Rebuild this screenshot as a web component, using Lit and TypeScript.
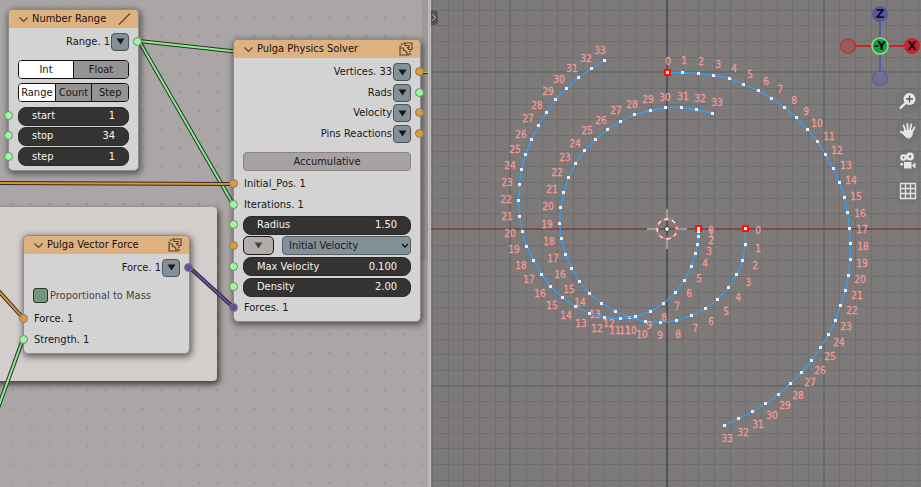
import { LitElement, html, svg, css, nothing } from "lit";
import { customElement, property } from "lit/decorators.js";

const FONT = css`"DejaVu Sans Condensed", "DejaVu Sans", sans-serif`;

type Kind = "green" | "orange" | "purple";
// Each entry: point x, point y, label x, label y
type Mark = [number, number, number, number];

const WIDE: Mark[] = [
  [667, 72, 668, 61], [682, 72, 684, 60], [698, 73, 701, 61], [713, 75, 718, 64], [729, 78, 734, 68],
  [743, 84, 750, 74], [758, 90, 766, 81], [771, 98, 780, 89], [784, 107, 794, 100], [796, 117, 806, 111],
  [807, 129, 817, 123], [817, 141, 829, 136], [825, 154, 837, 150], [833, 168, 846, 165], [839, 182, 851, 180],
  [844, 197, 856, 196], [847, 212, 860, 213], [849, 228, 862, 229], [850, 243, 863, 246], [850, 259, 862, 263],
  [848, 275, 860, 279], [845, 290, 857, 295], [840, 305, 852, 310], [835, 320, 846, 326], [828, 334, 839, 342],
  [820, 347, 830, 356], [811, 360, 820, 370], [801, 372, 810, 382], [790, 383, 798, 395], [778, 394, 785, 405],
  [765, 403, 772, 415], [752, 411, 758, 424], [738, 418, 743, 432], [724, 425, 727, 438],
];

const MIDDLE: Mark[] = [
  [745, 228, 758, 230], [745, 244, 758, 248], [742, 260, 755, 265], [736, 274, 748, 282], [728, 287, 738, 297],
  [717, 299, 726, 311], [705, 308, 711, 321], [691, 315, 695, 328], [676, 320, 678, 334], [660, 322, 660, 335],
  [645, 321, 642, 334], [629, 317, 625, 330], [615, 311, 609, 323], [601, 303, 595, 314], [589, 293, 580, 302],
  [579, 281, 569, 289], [571, 268, 560, 274], [565, 254, 553, 258], [561, 238, 549, 241], [559, 223, 547, 224],
  [560, 207, 548, 206], [563, 192, 552, 189], [568, 177, 557, 172], [575, 163, 565, 157], [584, 150, 575, 143],
  [595, 139, 587, 130], [607, 129, 601, 120], [620, 121, 616, 110], [634, 114, 632, 104], [650, 110, 648, 99],
  [665, 107, 665, 97], [681, 107, 683, 96], [696, 109, 700, 98], [712, 113, 717, 102],
];

const TIGHT: Mark[] = [
  [698, 228, 711, 230], [698, 231, 711, 233], [698, 236, 711, 240], [697, 244, 709, 251], [695, 253, 705, 263],
  [691, 266, 699, 278], [684, 280, 689, 293], [675, 292, 677, 306], [663, 303, 664, 317], [650, 311, 649, 325],
  [635, 316, 631, 330], [620, 318, 615, 330], [604, 317, 597, 328], [589, 313, 581, 323], [575, 306, 566, 315],
  [562, 297, 552, 305], [550, 286, 540, 293], [541, 274, 529, 279], [533, 260, 521, 265], [526, 246, 514, 249],
  [522, 231, 510, 233], [519, 216, 507, 216], [518, 200, 506, 199], [519, 184, 507, 182], [521, 169, 510, 165],
  [525, 154, 515, 149], [531, 139, 521, 134], [538, 125, 528, 118], [546, 112, 537, 105], [555, 99, 548, 91],
  [566, 88, 559, 79], [578, 77, 572, 68], [591, 68, 586, 58], [604, 60, 600, 50],
];

const GRID_STEP = 15.67;

@customElement("node-socket")
class NodeSocket extends LitElement {
  @property({ reflect: true }) kind: Kind = "green";
  @property({ reflect: true }) side: "in" | "out" = "in";
  static styles = css`
    :host {
      position: absolute;
      top: calc(50% - 5px);
      left: -14px;
      width: 9px;
      height: 9px;
      box-sizing: border-box;
      border: 1px solid #77807a;
      border-radius: 50%;
      background: #98fb98;
    }
    :host([side="out"]) { left: auto; right: -13px; }
    :host([kind="orange"]) { background: #e09a34; }
    :host([kind="purple"]) { background: #664ea0; }
  `;
  render() {
    return nothing;
  }
}

@customElement("editor-node")
class EditorNode extends LitElement {
  @property() heading = "";
  @property() icon: "line" | "physics" = "physics";
  static styles = css`
    :host {
      display: block;
      box-sizing: border-box;
      border: 1px solid #8e8b8a;
      border-radius: 5px;
      background: #d3d3d3;
      box-shadow: 1px 2px 6px 1px rgba(30, 25, 25, 0.6);
    }
    header {
      display: flex;
      align-items: center;
      height: 18px;
      padding: 0 7px 0 10px;
      border-radius: 4px 4px 0 0;
      background: #deb180;
    }
    h2 {
      flex: 1;
      margin: 0 0 0 4px;
      font: 11px/18px ${FONT};
      color: #16120e;
      white-space: nowrap;
    }
    svg { display: block; fill: none; stroke: #57462f; }
    .body { padding: 3px 9px; }
  `;
  render() {
    return html`
      <header>
        <svg width="9" height="9" viewBox="0 0 9 9"><path d="M.5 2.5 4.5 6.5 8.5 2.5" stroke-width="1.2" /></svg>
        <h2>${this.heading}</h2>
        ${this.icon === "line"
          ? html`<svg width="13" height="14" viewBox="0 0 13 14"><path d="M1 12.500 12 1.500" stroke-width="1.2" /></svg>`
          : html`<svg width="14" height="14" viewBox="0 0 14 14" stroke-width="1.2">
              <path d="M6 1H13V7.500H10L8.500 5.500H10V3.500H6ZM1 6H4.500V8.500H6L8 10.500V13H1ZM2 1.500 3.300 3M5 .3 4.600 1.800M.3 4.300 2 4.500M10 9.500 12 9M9.800 11 12 12.800M9.300 12.200V13.800" />
            </svg>`}
      </header>
      <div class="body"><slot></slot></div>
    `;
  }
}

@customElement("node-graph")
class NodeGraph extends LitElement {
  static styles = css`
    :host {
      display: block;
      position: relative;
      overflow: hidden;
      background: #aaa6a5;
      font: 11px/16px ${FONT};
      color: #171717;
    }
    .dots, .wires { position: absolute; inset: 0; width: 100%; height: 100%; }
    .wires { fill: none; }
    .edge { stroke: #2e2e2c; stroke-width: 4; }
    .green { stroke: #8af08e; stroke-width: 2; }
    .orange { stroke: #dc932e; stroke-width: 2; }
    .purple { stroke: #664ea6; stroke-width: 2; }
    .frame {
      position: absolute;
      left: -8px;
      top: 207px;
      width: 225px;
      height: 174px;
      border-radius: 4px;
      background: #d3cdcc;
      box-shadow: 2px 3px 6px rgba(30, 25, 25, 0.8);
    }
    .range { position: absolute; left: 8px; top: 9px; width: 131px; }
    .solver { position: absolute; left: 233px; top: 39px; width: 188px; }
    .force { position: absolute; left: 23px; top: 235px; width: 167px; }
    .scroll { position: absolute; right: 0; top: 0; width: 6px; height: 260px; background: #a09999; }
    .outs, .ins { display: grid; grid-auto-rows: 1fr; }
    .outs.four { height: 82px; margin-top: 1px; }
    .outs.one { height: 21px; }
    .ins.seven { height: 144px; margin-top: 3px; }
    .ins.three { height: 61px; margin-top: 4px; }
    .ins.two { height: 42px; margin-top: 5px; }
    .row { position: relative; display: flex; align-items: center; }
    .outs .row { justify-content: flex-end; gap: 1px; }
    .plain { padding-left: 1px; }
    button, input, select {
      box-sizing: border-box;
      margin: 0;
      font: inherit;
      color: inherit;
    }
    .drop {
      display: grid;
      place-items: center;
      width: 18px;
      height: 18px;
      padding: 0;
      border: 1px solid #4c5256;
      border-radius: 4px;
      background: #839098;
    }
    .drop.wide { width: 31px; height: 19px; border-color: #1a1a1a; border-radius: 5px; background: #b3acab; color: #444; }
    .drop svg { display: block; fill: currentColor; }
    .segment {
      display: flex;
      height: 19px;
      margin-top: 8px;
      box-sizing: border-box;
      border: 1px solid #111;
      border-radius: 4px;
      overflow: hidden;
    }
    .segment + .segment { margin-top: 4px; }
    .segment button { flex: 1; padding: 0; border: 0; background: #959393; line-height: 16px; }
    .segment button + button { border-left: 1px solid #111; }
    .segment .on { background: #fff; }
    .wide-button {
      display: block;
      width: 100%;
      height: 19px;
      margin-top: 8px;
      padding: 0;
      border: 1px solid #888483;
      border-radius: 4px;
      background: #a7a2a1;
    }
    .pill {
      flex: 1;
      display: flex;
      align-items: center;
      box-sizing: border-box;
      height: 19px;
      padding: 0 13px;
      border: 1px solid #2b2a29;
      border-radius: 8px;
      background: #353331;
      color: #f4f4f4;
    }
    .pill label { flex: 1; white-space: nowrap; }
    .pill input { width: 44px; padding: 0; border: 0; outline: 0; background: none; text-align: right; }
    .picker { position: relative; flex: 1; margin-left: 8px; }
    .picker select {
      appearance: none;
      display: block;
      width: 100%;
      height: 19px;
      padding: 0 6px;
      border: 1px solid #565f65;
      border-radius: 4px;
      background: #839098;
    }
    .picker svg { position: absolute; right: 2px; top: 6px; fill: none; stroke: #111; stroke-width: 1.4; pointer-events: none; }
    .check { display: flex; align-items: center; gap: 2px; height: 15px; margin-top: 10px; color: #4c4140; white-space: nowrap; }
    .check input { appearance: none; width: 15px; height: 15px; border: 1px solid #26332a; border-radius: 3px; background: #76937d; }
  `;

  private wire(kind: Kind, d: string) {
    return svg`<path class="edge" d=${d} /><path class=${kind} d=${d} />`;
  }

  private drop(label: string, wide = false) {
    return html`<button class=${wide ? "drop wide" : "drop"} aria-label=${label}>
      <svg width="9" height="7" viewBox="0 0 9 7"><path d="M.5 .5H8.5L4.5 6.5Z" /></svg>
    </button>`;
  }

  private output(name: string, kind: Kind) {
    return html`<div class="row"><span>${name}</span>${this.drop(`${name} options`)}<node-socket side="out" kind=${kind}></node-socket></div>`;
  }

  private plain(name: string, kind: Kind) {
    return html`<div class="row"><node-socket kind=${kind}></node-socket><span class="plain">${name}</span></div>`;
  }

  private field(name: string, value: string) {
    const id = name.toLowerCase().replace(" ", "-");
    return html`<div class="row">
      <node-socket></node-socket>
      <div class="pill"><label for=${id}>${name}</label><input id=${id} .value=${value} /></div>
    </div>`;
  }

  render() {
    return html`
      <svg class="dots" aria-hidden="true">
        <defs>
          <pattern id="dots" width="18.6" height="18.6" x="12" y="17" patternUnits="userSpaceOnUse">
            <rect width="2" height="2" fill="#999595" />
          </pattern>
        </defs>
        <rect width="100%" height="100%" fill="url(#dots)" />
      </svg>
      <div class="scroll"></div>
      <div class="frame"></div>
      <svg class="wires" aria-hidden="true">
        ${this.wire("green", "M139 41 240 52")}
        ${this.wire("green", "M139 41 233 204")}
        ${this.wire("orange", "M-4 183 233 184")}
        ${this.wire("orange", "M-4 288 23 318")}
        ${this.wire("green", "M23 339-2 408")}
        ${this.wire("purple", "M189 267 233 307")}
        ${this.wire("green", "M420 72H432")}
        <path class="orange" d="M420 71H432" />
      </svg>

      <editor-node class="range" heading="Number Range" icon="line">
        <div class="outs one">${this.output("Range. 1", "green")}</div>
        <div class="segment"><button class="on" aria-pressed="true">Int</button><button>Float</button></div>
        <div class="segment"><button class="on" aria-pressed="true">Range</button><button>Count</button><button>Step</button></div>
        <div class="ins three">${this.field("start", "1")}${this.field("stop", "34")}${this.field("step", "1")}</div>
      </editor-node>

      <editor-node class="solver" heading="Pulga Physics Solver">
        <div class="outs four">
          ${this.output("Vertices. 33", "orange")}${this.output("Rads", "green")}
          ${this.output("Velocity", "orange")}${this.output("Pins Reactions", "orange")}
        </div>
        <button class="wide-button">Accumulative</button>
        <div class="ins seven">
          ${this.plain("Initial_Pos. 1", "orange")}${this.plain("Iterations. 1", "green")}
          ${this.field("Radius", "1.50")}
          <div class="row">
            <node-socket kind="orange"></node-socket>
            ${this.drop("Object input", true)}
            <div class="picker">
              <select aria-label="Velocity source"><option>Initial Velocity</option></select>
              <svg width="8" height="7" viewBox="0 0 8 7"><path d="M1 2 4 5 7 2" /></svg>
            </div>
          </div>
          ${this.field("Max Velocity", "0.100")}${this.field("Density", "2.00")}
          ${this.plain("Forces. 1", "purple")}
        </div>
      </editor-node>

      <editor-node class="force" heading="Pulga Vector Force">
        <div class="outs one">${this.output("Force. 1", "purple")}</div>
        <label class="check"><input type="checkbox" />Proportional to Mass</label>
        <div class="ins two">${this.plain("Force. 1", "orange")}${this.plain("Strength. 1", "green")}</div>
      </editor-node>
    `;
  }
}

@customElement("view-port")
class ViewPort extends LitElement {
  static styles = css`
    :host { display: block; position: relative; overflow: hidden; background: #7d7a79; }
    .scene { position: absolute; inset: 0; width: 100%; height: 100%; }
    .minor { stroke: #6b7072; stroke-width: 1; }
    .major { stroke: #696b6b; stroke-width: 2; }
    .curve { fill: none; stroke: #2fa2fa; stroke-width: 1.3; }
    .point { fill: #f0ecf4; }
    .first { fill: #ff1000; }
    .index { font: 10px ${FONT}; fill: #f29994; stroke: #f29994; stroke-width: 0.3; text-anchor: middle; }
    .toggle {
      position: absolute;
      left: 0;
      top: 10px;
      width: 7px;
      height: 15px;
      padding: 0;
      border: 0;
      border-radius: 0 4px 4px 0;
      background: #565453;
    }
    .toggle svg { display: block; fill: none; stroke: #c4c4c4; }
    .gizmo { position: absolute; right: 0; top: 0; }
    .gizmo text { font: bold 12px "DejaVu Sans", sans-serif; text-anchor: middle; fill: #101018; }
    .tools { position: absolute; right: 0; top: 88px; display: flex; flex-direction: column; gap: 4px; }
    .tools button {
      display: grid;
      place-items: center;
      width: 26px;
      height: 26px;
      padding: 0;
      border: 0;
      border-radius: 13px;
      background: rgba(110, 108, 107, 0.35);
    }
    .tools svg { display: block; }
  `;

  private grid() {
    const lines = [];
    for (let k = -16; k <= 17; k++) {
      const offset = Math.round(k * GRID_STEP);
      const kind = k % 10 === 0 ? "major" : "minor";
      const nudge = kind === "major" ? 0 : 0.5;
      const x = 667 + offset + nudge;
      const y = 229 + offset + nudge;
      lines.push(svg`<path class=${kind} d=${`M${x} 0V487M431 ${y}H921`} />`);
    }
    return lines;
  }

  private curve(marks: Mark[]) {
    const path = marks.map(([x, y]) => `${x + 0.5},${y + 0.5}`).join(" ");
    const [fx, fy] = marks[0];
    return svg`
      <polyline class="curve" points=${path} />
      <rect class="first" x=${fx - 3} y=${fy - 3} width="7" height="7" />
      ${marks.map(([x, y]) => svg`<rect class="point" x=${x - 1} y=${y - 1} width="3" height="3" />`)}
      ${marks.map(([, , x, y], i) => svg`<text class="index" x=${x} y=${y + 4}>${i}</text>`)}
    `;
  }

  render() {
    return html`
      <svg class="scene" viewBox="431 0 490 487" preserveAspectRatio="xMidYMid slice">
        ${this.grid()}
        <path d="M431 229H921" stroke="#7a4d4d" stroke-width="2" />
        <path d="M667 0V487" stroke="#50505f" stroke-width="2" />
        <path d="M647 229H659M675 229H687M667 209V221M667 237V249" stroke="#a09c9c" stroke-width="2" />
        ${this.curve(WIDE)} ${this.curve(MIDDLE)} ${this.curve(TIGHT)}
        <circle cx="667" cy="229" r="10" fill="none" stroke="#eee" stroke-width="1.3" />
        <circle cx="667" cy="229" r="10" fill="none" stroke="#e04040" stroke-width="1.3" stroke-dasharray="4 4" />
        <circle cx="667" cy="229" r="2.5" fill="#eee" stroke="#333" />
      </svg>
      <button class="toggle" aria-label="Show toolbar">
        <svg width="7" height="15" viewBox="0 0 7 15"><path d="M1.5 4.5 4.5 7.5 1.5 10.5" /></svg>
      </button>
      <svg class="gizmo" width="86" height="90" viewBox="835 0 86 90">
        <path d="M848 46H912" stroke="#c4262b" stroke-width="2" />
        <path d="M880 14V78" stroke="#5a5aa4" stroke-width="2" />
        <circle cx="848" cy="46" r="7.2" fill="#955e5e" stroke="#c82a2d" stroke-width="1.3" />
        <circle cx="880" cy="78" r="7.2" fill="#70708f" stroke="#5a5aa4" stroke-width="1.3" />
        <circle cx="880" cy="14" r="8" fill="#5858a2" />
        <circle cx="912" cy="46" r="8" fill="#c8242a" />
        <circle cx="880" cy="46" r="8" fill="#1f9c3c" stroke="#8fe09a" stroke-width="1.5" />
        <text x="880" y="18">Z</text>
        <text x="880" y="50">-Y</text>
        <text x="912" y="50">X</text>
      </svg>
      <div class="tools">
        <button aria-label="Zoom">
          <svg width="18" height="18" viewBox="0 0 18 18">
            <circle cx="10.5" cy="7" r="6" fill="#e6e6e6" />
            <path d="M6.5 11 1.5 16" stroke="#e6e6e6" stroke-width="2.4" stroke-linecap="round" />
            <path d="M10.5 3.5V10.5M7 7H14" stroke="#555" stroke-width="1.4" />
          </svg>
        </button>
        <button aria-label="Pan">
          <svg width="18" height="18" viewBox="0 0 18 18" fill="none" stroke="#e6e6e6" stroke-width="1.8" stroke-linecap="round">
            <path d="M6.500 9 4.500 3.500M8.800 8.500 8.300 1.800M11 8.500 12.300 2.500M13 10 15.500 5.500M5.500 12.500 1.800 9.500" />
            <path d="M5.500 8.500H13.500C13.800 12.500 12.500 16 9.500 16 7 16 5.500 13.500 4.500 11.500Z" fill="#e6e6e6" stroke-width="1" />
          </svg>
        </button>
        <button aria-label="Camera view">
          <svg width="18" height="18" viewBox="0 0 18 18" fill="#e6e6e6">
            <circle cx="4.500" cy="5.500" r="3.300" /><circle cx="11" cy="4.500" r="4" />
            <path d="M5 10H12.500V16.500H5ZM13.300 13 16.500 10.500V16.500L13.300 14ZM1.500 11H4V13.500H1.500Z" />
            <g fill="#666"><circle cx="4.500" cy="5.500" r="1" /><circle cx="11" cy="4.500" r="1.200" /></g>
          </svg>
        </button>
        <button aria-label="Toggle perspective">
          <svg width="18" height="18" viewBox="0 0 18 18" fill="none" stroke="#e6e6e6" stroke-width="1.3">
            <path d="M1.500 1.500H16.500V16.500H1.500ZM6.500 1.500V16.500M11.500 1.500V16.500M1.500 6.500H16.500M1.500 11.500H16.500" />
          </svg>
        </button>
      </div>
    `;
  }
}

@customElement("app-root")
class AppRoot extends LitElement {
  static styles = css`
    :host {
      display: grid;
      grid-template-columns: 428fr 3px 490fr;
      height: 100vh;
      overflow: hidden;
    }
    .divider { background: #bdb9b9; }
  `;
  render() {
    return html`<node-graph></node-graph><div class="divider"></div><view-port></view-port>`;
  }
}
